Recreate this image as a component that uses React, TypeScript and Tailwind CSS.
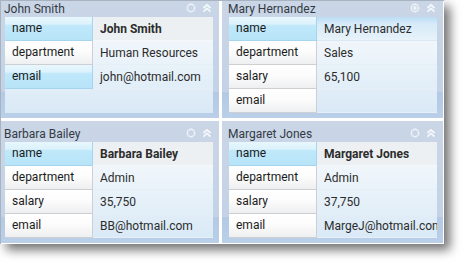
import React from "react";

type Row = { label: string; value: string; bold?: boolean; selected?: boolean };
type Panel = { title: string; rows: Row[]; icon: "ring" | "dot"; focused?: boolean };

const panels: Panel[] = [
  {
    title: "John Smith",
    icon: "ring",
    rows: [
      { label: "name", value: "John Smith", bold: true, selected: true },
      { label: "department", value: "Human Resources" },
      { label: "email", value: "john@hotmail.com", selected: true },
    ],
  },
  {
    title: "Mary Hernandez",
    icon: "dot",
    focused: true,
    rows: [
      { label: "name", value: "Mary Hernandez", selected: true },
      { label: "department", value: "Sales" },
      { label: "salary", value: "65,100" },
      { label: "email", value: "" },
    ],
  },
  {
    title: "Barbara Bailey",
    icon: "ring",
    rows: [
      { label: "name", value: "Barbara Bailey", bold: true, selected: true },
      { label: "department", value: "Admin" },
      { label: "salary", value: "35,750" },
      { label: "email", value: "BB@hotmail.com" },
    ],
  },
  {
    title: "Margaret Jones",
    icon: "ring",
    rows: [
      { label: "name", value: "Margaret Jones", bold: true, selected: true },
      { label: "department", value: "Admin" },
      { label: "salary", value: "37,750" },
      { label: "email", value: "MargeJ@hotmail.com" },
    ],
  },
];

function RingIcon({ dot }: { dot: boolean }) {
  return (
    <svg width="10" height="10" viewBox="0 0 10 10">
      <circle cx="5" cy="5" r="3.7" fill="none" stroke="#eef3f9" strokeWidth="1.4" />
      {dot && <circle cx="5" cy="5" r="1.9" fill="#eef3f9" />}
    </svg>
  );
}

function ChevronsUp() {
  return (
    <svg width="10" height="10" viewBox="0 0 10 10">
      <path d="M1.5 5 L5 1.8 L8.5 5" fill="none" stroke="#f6f9fc" strokeWidth="1.7" />
      <path d="M1.5 8.6 L5 5.4 L8.5 8.6" fill="none" stroke="#f6f9fc" strokeWidth="1.7" />
    </svg>
  );
}

function PanelView({ p }: { p: Panel }) {
  return (
    <div className="flex flex-col w-[221px] h-[122px] bg-[linear-gradient(180deg,#cad6e6_0%,#c3d2e6_79%,#b3c9e4_79%,#bad0e9_100%)]">
      <div className="h-[21px] flex items-end pl-[6px] pr-[6px]">
        <div className="flex-1 text-[12px] leading-[16px] text-[#333a44]">{p.title}</div>
        <div className="flex items-center gap-[6px] h-[16px] mr-[1px] -translate-y-[1px]">
          <RingIcon dot={p.icon === "dot"} />
          <ChevronsUp />
        </div>
      </div>
      <div className="ml-[7px] w-[208px] h-[96px] overflow-hidden bg-[linear-gradient(180deg,#f6f9fc_0%,#ecf4fa_40%,#d9e9f6_100%)]">
        {p.rows.map((r, i) => (
          <div key={i} className="flex h-[24px]">
            <div
              className={
                r.selected
                  ? "w-[88px] shrink-0 pl-[7px] text-[12px] leading-[23px] text-[#1b1b1b] border-b border-r border-[#a6d6ef] bg-[linear-gradient(180deg,#e8f7fd_0%,#dcf2fc_30%,#bfe8fa_38%,#b8e4f8_100%)]"
                  : "w-[88px] shrink-0 pl-[7px] text-[12px] leading-[23px] text-[#1b1b1b] border-b border-r border-[#cdcfd2] bg-[linear-gradient(180deg,#ffffff_0%,#fcfcfc_45%,#eeeff0_100%)]"
              }
            >
              {r.label}
            </div>
            <div
              className={
                (r.bold
                  ? "font-bold bg-[#edf0f3] border-b border-[#f5f8fb] "
                  : p.focused && i === 0
                  ? "bg-[linear-gradient(180deg,#bcdcf4_0%,#d6eaf8_30%,#e8f2fa_100%)] border-b border-[#dbe8f3] "
                  : "border-b border-[#e6eff7] ") +
                "flex-1 min-w-0 pl-[7px] pt-[1px] text-[12px] leading-[23px] text-[#2c2c2c] whitespace-nowrap overflow-hidden"
              }
            >
              {r.value}
            </div>
          </div>
        ))}
      </div>
    </div>
  );
}

export default function App() {
  return (
    <div className="w-[464px] h-[263px] bg-white" style={{ fontFamily: 'Roboto, "Open Sans", sans-serif' }}>
      <div className="w-[444px] h-[244px] bg-white overflow-hidden border-t border-l border-[#a9b2bf] shadow-[6px_6px_10px_rgba(0,0,0,0.55)]">
        <div className="-ml-[3px] -mt-[5px] grid grid-cols-[221px_221px] grid-rows-[122px_122px] gap-[3px]">
          {panels.map((p, i) => (
            <PanelView key={i} p={p} />
          ))}
        </div>
      </div>
    </div>
  );
}
